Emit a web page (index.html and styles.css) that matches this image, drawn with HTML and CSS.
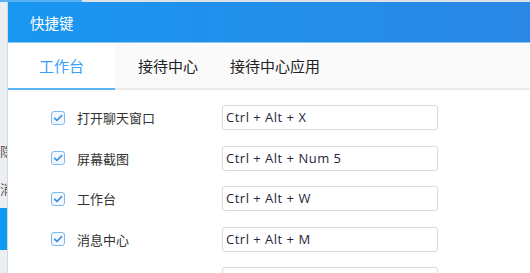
FILE: index.html
```html
<!DOCTYPE html>
<html lang="zh-CN">
<head>
<meta charset="utf-8">
<link rel="stylesheet" href="styles.css">
</head>
<body>
<div class="screen">
  <div class="topline"><div class="topline-active"></div></div>
  <div class="main">
    <div class="side">
      <div class="side-gap1"></div>
      <div class="side-item"><span>隐</span></div>
      <div class="side-gap2"></div>
      <div class="side-item"><span>消</span></div>
      <div class="side-gap3"></div>
      <div class="side-active"></div>
    </div>
    <div class="dialog">
      <div class="header">快捷键</div>
      <div class="tabs">
        <div class="tab tab-active">工作台</div>
        <div class="tab">接待中心</div>
        <div class="tab">接待中心应用</div>
      </div>
      <div class="list">
        <div class="row">
          <span class="check"><svg viewBox="0 0 14 14" width="14" height="14"><path d="M3.6 7.2 L6 9.5 L10.6 4.6" fill="none" stroke="#3b8fe6" stroke-width="1.6" stroke-linecap="round" stroke-linejoin="round"/></svg></span>
          <span class="label">打开聊天窗口</span>
          <span class="key">Ctrl + Alt + X</span>
        </div>
        <div class="row">
          <span class="check"><svg viewBox="0 0 14 14" width="14" height="14"><path d="M3.6 7.2 L6 9.5 L10.6 4.6" fill="none" stroke="#3b8fe6" stroke-width="1.6" stroke-linecap="round" stroke-linejoin="round"/></svg></span>
          <span class="label">屏幕截图</span>
          <span class="key">Ctrl + Alt + Num 5</span>
        </div>
        <div class="row">
          <span class="check"><svg viewBox="0 0 14 14" width="14" height="14"><path d="M3.6 7.2 L6 9.5 L10.6 4.6" fill="none" stroke="#3b8fe6" stroke-width="1.6" stroke-linecap="round" stroke-linejoin="round"/></svg></span>
          <span class="label">工作台</span>
          <span class="key">Ctrl + Alt + W</span>
        </div>
        <div class="row">
          <span class="check"><svg viewBox="0 0 14 14" width="14" height="14"><path d="M3.6 7.2 L6 9.5 L10.6 4.6" fill="none" stroke="#3b8fe6" stroke-width="1.6" stroke-linecap="round" stroke-linejoin="round"/></svg></span>
          <span class="label">消息中心</span>
          <span class="key">Ctrl + Alt + M</span>
        </div>
        <div class="row">
          <span class="check"><svg viewBox="0 0 14 14" width="14" height="14"><path d="M3.6 7.2 L6 9.5 L10.6 4.6" fill="none" stroke="#3b8fe6" stroke-width="1.6" stroke-linecap="round" stroke-linejoin="round"/></svg></span>
          <span class="label">打开聊天窗口列表</span>
          <span class="key">Ctrl + Alt + L</span>
        </div>
      </div>
    </div>
  </div>
</div>
</body>
</html>
```
FILE: styles.css
```css
* { box-sizing: border-box; }
html, body { margin: 0; padding: 0; }
body {
  width: 530px;
  height: 273px;
  overflow: hidden;
  background: #fff;
  font-family: "Noto Sans CJK SC", "Noto Sans", sans-serif;
}
.screen { display: flex; flex-direction: column; height: 273px; }
.topline { height: 2px; background: #dfe2e5; flex: none; display: flex; }
.topline-active { width: 82px; background: #56b2f5; }
.main { flex: 1; display: flex; min-height: 0; }
.side {
  width: 8px;
  flex: none;
  background: #eceff2;
  border-right: 1px solid #d3d8dd;
  display: flex;
  flex-direction: column;
  overflow: hidden;
}
.side-gap1 { height: 140px; flex: none; }
.side-gap2 { height: 20px; flex: none; }
.side-gap3 { height: 10px; flex: none; }
.side-item {
  height: 18px;
  width: 7px;
  display: flex;
  justify-content: flex-end;
  overflow: hidden;
  flex: none;
}
.side-item span {
  flex: none;
  font-size: 13px;
  line-height: 18px;
  color: #5a5060;
  width: 13px;
  margin-right: -6px;
}
.side-active { height: 42px; width: 7px; background: #0b9cf0; flex: none; }
.dialog { flex: 1; display: flex; flex-direction: column; background: #fff; }
.header {
  height: 41px;
  flex: none;
  background: linear-gradient(90deg, #1997f1, #2a87e5);
  color: #fff;
  font-size: 14.5px;
  line-height: 41px;
  padding-left: 22px;
  border-bottom: 1px solid #8cc6f5;
}
.tabs {
  height: 47px;
  flex: none;
  display: flex;
  background: #fafafa;
  border-bottom: 2px solid #ebebeb;
}
.tab {
  font-size: 15px;
  color: #222;
  line-height: 45px;
  padding: 0 16px;
  margin-bottom: -2px;
}
.tab-active {
  width: 107px;
  padding: 0;
  text-align: center;
  color: #3aa0f3;
  background: #fff;
  border-bottom: 2px solid #5cb5f7;
  margin-right: 7px;
}
.list {
  display: flex;
  flex-direction: column;
  gap: 15.5px;
  padding: 15px 0 0 43px;
}
.row { display: flex; align-items: center; height: 25px; flex: none; }
.check {
  width: 14px;
  height: 14px;
  border: 1.5px solid #7db8ef;
  border-radius: 3px;
  background: #f2f8fe;
  display: flex;
  align-items: center;
  justify-content: center;
  flex: none;
}
.check svg { display: block; flex: none; margin: -1.5px; }
.label {
  margin-left: 12px;
  width: 145px;
  font-size: 13px;
  color: #333;
}
.key {
  width: 216px;
  height: 25px;
  border: 1px solid #dcdcdc;
  border-radius: 3px;
  box-shadow: 0 0 1px rgba(0,0,0,0.08);
  font-family: "Open Sans", "Noto Sans", sans-serif;
  font-size: 13px;
  letter-spacing: 0.5px;
  line-height: 23px;
  color: #26263a;
  padding-left: 3px;
  flex: none;
}
```
